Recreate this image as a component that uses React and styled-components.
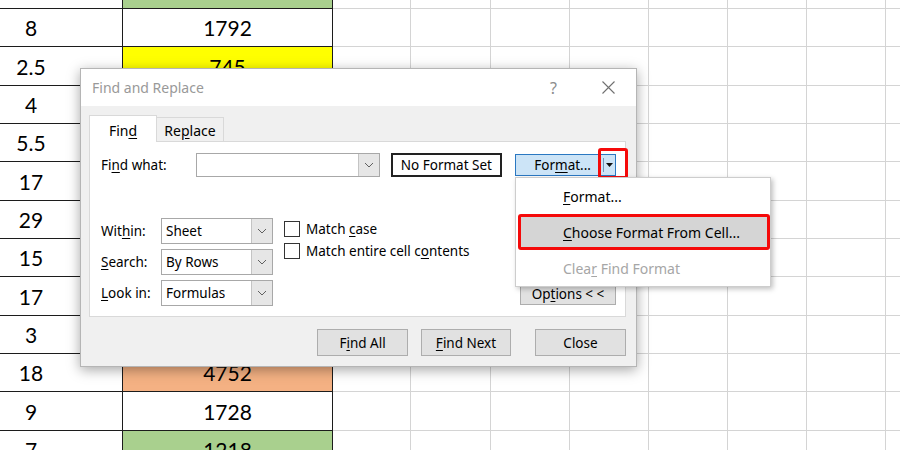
import React from 'react';
import styled, { createGlobalStyle } from 'styled-components';

//global
const GlobalStyle = createGlobalStyle`
  html, body { margin: 0; padding: 0; background: #fff; }
  body { font-family: "Noto Sans", "Liberation Sans", sans-serif; }
`;

const Screen = styled.div`
  position: relative;
  width: 900px;
  height: 450px;
  overflow: hidden;
  background: #fff;
`;

//sheet
const Sheet = styled.div`
  display: grid;
  grid-template-columns: 123px 210px 78px 80px repeat(6, 79px);
  grid-template-rows: 9px;
  grid-auto-rows: 38.33px;
`;

const Cell = styled.div`
  box-sizing: border-box;
  display: flex;
  align-items: flex-end;
  justify-content: center;
  padding: 0 ${(p) => p.$padRight || 0}px 3px 0;
  border-right: 1px solid ${(p) => (p.$dark ? '#1c1c1c' : '#d4d4d4')};
  border-bottom: 1px solid ${(p) => (p.$dark ? '#1c1c1c' : '#d4d4d4')};
  background: ${(p) => p.$fill || '#fff'};
  font-family: Lato, "Noto Sans", sans-serif;
  font-size: 21px;
  line-height: 30px;
  color: #000;
  overflow: hidden;
`;

//dialog
const Dialog = styled.div`
  position: absolute;
  left: 80px;
  top: 68px;
  width: 557px;
  height: 299px;
  box-sizing: border-box;
  border: 1px solid #b5b5b5;
  box-shadow: 0 3px 12px rgba(0, 0, 0, 0.35);
  display: flex;
  flex-direction: column;
  font-family: "Noto Sans", "Liberation Sans", sans-serif;
  font-size: 13.5px;
  color: #000;
`;

const TitleBar = styled.div`
  height: 37px;
  flex-shrink: 0;
  background: #fff;
  display: flex;
  align-items: center;
  padding: 0 21px 0 11px;
`;

const Title = styled.div`
  flex: 1;
  color: #999;
  font-size: 14px;
`;

const Help = styled.span`
  color: #8c8c8c;
  font-size: 16px;
  margin-right: 45px;
`;

const Body = styled.div`
  flex: 1;
  background: #f0f0f0;
  padding: 9px 10px 0 8px;
  display: flex;
  flex-direction: column;
`;

const Tabs = styled.div`
  display: flex;
  align-items: flex-end;
  height: 27px;
  margin-bottom: -1px;
  position: relative;
  z-index: 1;
`;

const Tab = styled.div`
  box-sizing: border-box;
  width: ${(p) => p.$w}px;
  height: ${(p) => (p.$active ? 27 : 25)}px;
  background: ${(p) => (p.$active ? '#fff' : '#f0f0f0')};
  border: 1px solid #d9d9d9;
  border-bottom: ${(p) => (p.$active ? 'none' : '1px solid #d9d9d9')};
  border-left: ${(p) => (p.$active ? '1px solid #d9d9d9' : 'none')};
  text-align: center;
  padding-top: ${(p) => (p.$active ? 5 : 3)}px;
  font-size: 14px;
`;

const Panel = styled.div`
  box-sizing: border-box;
  height: 176px;
  background: #fff;
  border: 1px solid #d9d9d9;
  padding: 11px 9px 0 11px;
`;

const Row = styled.div`
  display: flex;
  align-items: center;
`;

const Label = styled.span`
  width: ${(p) => p.$w}px;
  flex-shrink: 0;
`;

const Text = styled.span`
  white-space: pre;
`;

const Key = styled.u`
  text-decoration: underline;
  text-underline-offset: 2px;
`;

const Combo = styled.div`
  box-sizing: border-box;
  width: ${(p) => p.$w}px;
  height: ${(p) => p.$h}px;
  border: 1px solid #a8a8a8;
  background: #fff;
  display: flex;
  align-items: stretch;
`;

const ComboValue = styled.div`
  flex: 1;
  display: flex;
  align-items: center;
  padding-left: 4px;
`;

const ComboArrow = styled.div`
  width: 20px;
  background: #e6e6e6;
  border-left: 1px solid #c4c4c4;
  display: flex;
  align-items: center;
  justify-content: center;
`;

const FormatBox = styled.div`
  box-sizing: border-box;
  margin-left: 11px;
  width: 112px;
  height: 24px;
  border: 2px solid #222;
  display: flex;
  align-items: center;
  justify-content: center;
`;

const SplitButton = styled.div`
  position: relative;
  box-sizing: border-box;
  margin-left: 13px;
  width: 101px;
  height: 22px;
  background: #cce4f7;
  border: 1px solid #2a78c2;
  display: flex;
  align-items: center;
`;

const SplitLabel = styled.div`
  flex: 1;
  text-align: center;
  padding-left: 6px;
`;

const SplitDivider = styled.div`
  width: 1px;
  height: 14px;
  background: #6f97bd;
`;

const SplitArrow = styled.div`
  width: 11px;
  display: flex;
  justify-content: center;
`;

const Highlight = styled.div`
  position: absolute;
  left: 82px;
  top: -7px;
  width: 30px;
  height: 31px;
  box-sizing: border-box;
  border: 3px solid #f50a0a;
  border-radius: 3px;
`;

const Options = styled.div`
  display: flex;
  align-items: flex-start;
  margin-top: 41px;
`;

const Fields = styled.div`
  display: flex;
  flex-direction: column;
  gap: 5px;
`;

const Checks = styled.div`
  display: flex;
  flex-direction: column;
  gap: 6px;
  margin-left: 11px;
  margin-top: 3px;
`;

const Check = styled.label`
  display: flex;
  align-items: center;
  height: 16px;
`;

const Box = styled.span`
  box-sizing: border-box;
  width: 16px;
  height: 16px;
  border: 1px solid #333;
  background: #fff;
  margin-right: 6px;
`;

const Button = styled.div`
  box-sizing: border-box;
  width: ${(p) => p.$w}px;
  height: ${(p) => p.$h || 27}px;
  margin-left: ${(p) => p.$gap || 0}px;
  background: #e1e1e1;
  border: 1px solid #adadad;
  display: flex;
  align-items: center;
  justify-content: center;
`;

const OptionsButton = styled(Button)`
  margin-left: auto;
  align-self: flex-end;
  margin-bottom: 1px;
`;

const Footer = styled.div`
  display: flex;
  justify-content: flex-end;
  margin-top: 12px;
`;

//menu
const Menu = styled.div`
  position: absolute;
  left: 515px;
  top: 177px;
  width: 256px;
  box-sizing: border-box;
  border: 1px solid #cdcdcd;
  background: #fff;
  box-shadow: 2px 2px 5px rgba(0, 0, 0, 0.25);
  font-family: "Noto Sans", "Liberation Sans", sans-serif;
  font-size: 14px;
`;

const MenuItem = styled.div`
  box-sizing: border-box;
  height: 36px;
  display: flex;
  align-items: center;
  padding-left: ${(p) => (p.$active ? 42 : 47)}px;
  margin-left: ${(p) => (p.$active ? 2 : 0)}px;
  color: ${(p) => (p.$disabled ? '#a6a6a6' : '#000')};
  background: ${(p) => (p.$active ? '#d5d5d5' : 'transparent')};
  border: ${(p) => (p.$active ? '3px solid #f50a0a' : 'none')};
  border-radius: ${(p) => (p.$active ? 3 : 0)}px;
`;

const Chevron = () => (
  <svg width="10" height="6" viewBox="0 0 10 6">
    <polyline points="1,1 5,5 9,1" fill="none" stroke="#606060" strokeWidth="1" />
  </svg>
);

const CloseIcon = () => (
  <svg width="13" height="13" viewBox="0 0 13 13">
    <path d="M0.5 0.5 L12.5 12.5 M12.5 0.5 L0.5 12.5" stroke="#707070" strokeWidth="1.1" />
  </svg>
);

const Caret = () => (
  <svg width="7" height="4" viewBox="0 0 7 4">
    <polygon points="0,0 7,0 3.5,4" fill="#111" />
  </svg>
);

// values under the dialog are not visible, so they stay empty
const ROWS = [
  { a: '', b: '', fill: '#a9d08e' },
  { a: '8', b: '1792' },
  { a: '2.5', b: '745', fill: '#ffff00' },
  { a: '4', b: '' },
  { a: '5.5', b: '' },
  { a: '17', b: '' },
  { a: '29', b: '' },
  { a: '15', b: '' },
  { a: '17', b: '' },
  { a: '3', b: '' },
  { a: '18', b: '4752', fill: '#f4b183' },
  { a: '9', b: '1728' },
  { a: '7', b: '1218', fill: '#a9d08e' },
];

const EMPTY = Array.from({ length: 8 });

export default function App() {
  return (
    <Screen>
      <GlobalStyle />
      <Sheet>
        {ROWS.map((row, i) => (
          <React.Fragment key={i}>
            <Cell $dark $padRight={60}>{row.a}</Cell>
            <Cell $dark $fill={row.fill}>{row.b}</Cell>
            {EMPTY.map((_, j) => (
              <Cell key={j} />
            ))}
          </React.Fragment>
        ))}
      </Sheet>

      <Dialog>
        <TitleBar>
          <Title>Find and Replace</Title>
          <Help>?</Help>
          <CloseIcon />
        </TitleBar>
        <Body>
          <Tabs>
            <Tab $active $w={68}>
              Fin<Key>d</Key>
            </Tab>
            <Tab $w={67}>
              Re<Key>p</Key>lace
            </Tab>
          </Tabs>
          <Panel>
            <Row>
              <Label $w={95}>
                Fi<Key>n</Key>d what:
              </Label>
              <Combo $w={184} $h={24}>
                <ComboValue />
                <ComboArrow>
                  <Chevron />
                </ComboArrow>
              </Combo>
              <FormatBox>No Format Set</FormatBox>
              <SplitButton>
                <SplitLabel>
                  For<Key>m</Key>at...
                </SplitLabel>
                <SplitDivider />
                <SplitArrow>
                  <Caret />
                </SplitArrow>
                <Highlight />
              </SplitButton>
            </Row>
            <Options>
              <Fields>
                <Row>
                  <Label $w={60}>
                    Wit<Key>h</Key>in:
                  </Label>
                  <Combo $w={112} $h={26}>
                    <ComboValue>Sheet</ComboValue>
                    <ComboArrow>
                      <Chevron />
                    </ComboArrow>
                  </Combo>
                </Row>
                <Row>
                  <Label $w={60}>
                    <Key>S</Key>earch:
                  </Label>
                  <Combo $w={112} $h={26}>
                    <ComboValue>By Rows</ComboValue>
                    <ComboArrow>
                      <Chevron />
                    </ComboArrow>
                  </Combo>
                </Row>
                <Row>
                  <Label $w={60}>
                    <Key>L</Key>ook in:
                  </Label>
                  <Combo $w={112} $h={26}>
                    <ComboValue>Formulas</ComboValue>
                    <ComboArrow>
                      <Chevron />
                    </ComboArrow>
                  </Combo>
                </Row>
              </Fields>
              <Checks>
                <Check>
                  <Box />
                  <Text>
                    Match <Key>c</Key>ase
                  </Text>
                </Check>
                <Check>
                  <Box />
                  <Text>
                    Match entire cell c<Key>o</Key>ntents
                  </Text>
                </Check>
              </Checks>
              <OptionsButton $w={96} $h={23}>
                <Text>
                  Op<Key>t</Key>ions &lt; &lt;
                </Text>
              </OptionsButton>
            </Options>
          </Panel>
          <Footer>
            <Button $w={91}>
              <Text>
                F<Key>i</Key>nd All
              </Text>
            </Button>
            <Button $w={90} $gap={13}>
              <Text>
                <Key>F</Key>ind Next
              </Text>
            </Button>
            <Button $w={91} $gap={24}>
              Close
            </Button>
          </Footer>
        </Body>
      </Dialog>

      <Menu>
        <MenuItem>
          <Text>
            <Key>F</Key>ormat...
          </Text>
        </MenuItem>
        <MenuItem $active>
          <Text>
            <Key>C</Key>hoose Format From Cell...
          </Text>
        </MenuItem>
        <MenuItem $disabled>
          <Text>
            Clea<Key>r</Key> Find Format
          </Text>
        </MenuItem>
      </Menu>
    </Screen>
  );
}
